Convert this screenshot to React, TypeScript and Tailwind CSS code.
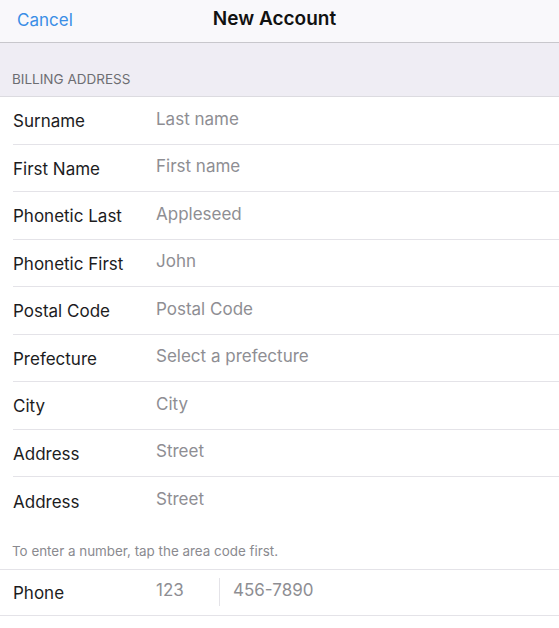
const rows = [
  { label: 'Surname', value: 'Last name' },
  { label: 'First Name', value: 'First name' },
  { label: 'Phonetic Last', value: 'Appleseed' },
  { label: 'Phonetic First', value: 'John' },
  { label: 'Postal Code', value: 'Postal Code' },
  { label: 'Prefecture', value: 'Select a prefecture' },
  { label: 'City', value: 'City' },
  { label: 'Address', value: 'Street' },
  { label: 'Address', value: 'Street' },
]

export default function App() {
  return (
    <div className="min-h-[628px] bg-white font-['Inter','Liberation_Sans',sans-serif] antialiased">
      <header className="relative flex h-[43px] items-center justify-center border-b border-[#c8c7cc] bg-[#f9f8fb]">
        <button className="absolute left-[17px] top-[8px] text-[17px] text-[#3a8ee6]">Cancel</button>
        <h1 className="-mt-[3px] -translate-x-[5px] text-[19px] font-semibold text-[#111]">New Account</h1>
      </header>

      <div className="flex h-[54px] items-end border-b border-[#dcdbe0] bg-[#efedf4] px-[12px] pb-[7px]">
        <p className="text-[13.5px] uppercase text-[#6d6d72]">Billing Address</p>
      </div>

      <ul className="bg-white pl-[13px]">
        {rows.map((row, i) => (
          <li
            key={i}
            className={`flex h-[47.5px] items-center ${i < rows.length - 1 ? 'border-b border-[#e4e3e8]' : ''}`}
          >
            <span className="w-[143px] pt-[3px] text-[17px] text-[#1c1c1e]">{row.label}</span>
            <span className="-mt-[2px] text-[17px] text-[#8e8e93]">{row.value}</span>
          </li>
        ))}
      </ul>

      <div className="flex h-[44px] items-end bg-white px-[12px] pb-[7px]">
        <p className="text-[13.4px] text-[#8a8a8f]">To enter a number, tap the area code first.</p>
      </div>

      <div className="flex h-[47px] items-center border-y border-[#e4e3e8] bg-white pl-[13px]">
        <span className="w-[143px] pt-[3px] text-[17px] text-[#1c1c1e]">Phone</span>
        <span className="-mt-[2px] w-[63px] text-[17px] text-[#8e8e93]">123</span>
        <span className="h-[28px] w-px bg-[#e4e3e8]" />
        <span className="-mt-[2px] pl-[13px] text-[17px] text-[#8e8e93]">456-7890</span>
      </div>
    </div>
  )
}
